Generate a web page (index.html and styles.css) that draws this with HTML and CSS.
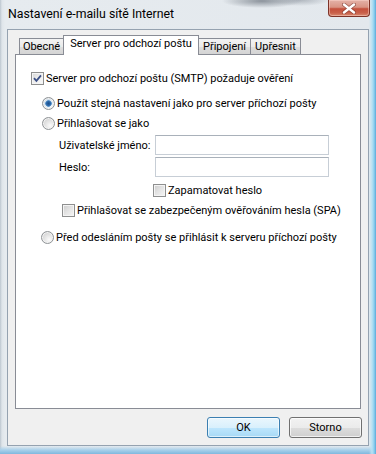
FILE: index.html
```html
<!DOCTYPE html>
<html lang="cs">
<head>
<meta charset="utf-8">
<title>Nastavení e-mailu sítě Internet</title>
<link rel="stylesheet" href="styles.css">
</head>
<body>
<div class="window">
  <div class="titlebar">
    <span class="title">Nastavení e-mailu sítě Internet</span>
    <div class="close">
      <svg width="14" height="11" viewBox="0 0 14 11">
        <path d="M2 1.5 L12 9.5 M12 1.5 L2 9.5" stroke="#6b2a22" stroke-width="4" stroke-linecap="round" opacity="0.55"/>
        <path d="M2 1.5 L12 9.5 M12 1.5 L2 9.5" stroke="#ffffff" stroke-width="2.4" stroke-linecap="round"/>
      </svg>
    </div>
  </div>
  <div class="client">
    <div class="tabs">
      <div class="tab tab-obecne">Obecné</div>
      <div class="tab active tab-server">Server pro odchozí poštu</div>
      <div class="tab tab-pripojeni">Připojení</div>
      <div class="tab tab-upresnit">Upřesnit</div>
    </div>
    <div class="panel">
      <div class="row row-smtp">
        <span class="check checked">
          <svg width="13" height="13" viewBox="0 0 13 13"><path d="M3 6.2 L5.4 8.8 L10 3.4" fill="none" stroke="#3b4f86" stroke-width="1.8"/></svg>
        </span>
        <span class="label">Server pro odchozí poštu (SMTP) požaduje ověření</span>
      </div>
      <div class="row row-r1">
        <span class="radio selected"></span>
        <span class="label">Použít stejná nastavení jako pro server příchozí pošty</span>
      </div>
      <div class="row row-r2">
        <span class="radio"></span>
        <span class="label">Přihlašovat se jako</span>
      </div>
      <div class="field row-user">
        <span class="field-label">Uživatelské jméno:</span>
        <span class="input"></span>
      </div>
      <div class="field row-pass">
        <span class="field-label">Heslo:</span>
        <span class="input"></span>
      </div>
      <div class="row row-remember">
        <span class="check"></span>
        <span class="label">Zapamatovat heslo</span>
      </div>
      <div class="row row-spa">
        <span class="check"></span>
        <span class="label">Přihlašovat se zabezpečeným ověřováním hesla (SPA)</span>
      </div>
      <div class="row row-r3">
        <span class="radio"></span>
        <span class="label">Před odesláním pošty se přihlásit k serveru příchozí pošty</span>
      </div>
    </div>
    <div class="buttons">
      <button class="btn btn-default">OK</button>
      <button class="btn">Storno</button>
    </div>
  </div>
</div>
</body>
</html>
```
FILE: styles.css
```css
html, body {
  margin: 0;
  padding: 0;
}
body {
  width: 376px;
  height: 454px;
  overflow: hidden;
  font-family: Roboto, "Open Sans", sans-serif;
  font-size: 11px;
  color: #000;
}
.window {
  box-sizing: border-box;
  width: 376px;
  height: 454px;
  display: flex;
  flex-direction: column;
  padding: 0 7px 8px 7px;
  background:
    linear-gradient(to left, #5aa9d8 0, #8fd0ef 2px, #b9e2f3 4px, rgba(220,230,238,0) 7px),
    radial-gradient(ellipse 40px 7px at 262px 1px, rgba(110,118,128,0.75), rgba(110,118,128,0)),
    radial-gradient(ellipse 30px 6px at 300px 0px, rgba(140,148,158,0.6), rgba(140,148,158,0)),
    linear-gradient(to bottom, rgba(150,200,230,0) 446px, #a9d0ea 450px, #7fb8de 454px),
    linear-gradient(to right, #bcc6cf 0, #dfe5ea 2px, #e6ebef 5px, #e3e8ed 100%);
}
.titlebar {
  height: 29px;
  display: flex;
  align-items: flex-start;
}
.title {
  margin-top: 6px;
  margin-left: 1px;
  font-size: 12.3px;
  line-height: 16px;
  color: #000;
}
.close {
  margin-left: auto;
  margin-right: -1px;
  width: 42px;
  height: 17px;
  box-sizing: border-box;
  border: 1px solid #7d3328;
  border-top: none;
  border-radius: 0 0 4px 4px;
  background: linear-gradient(to bottom, #e4b2a8 0, #d99484 45%, #c4503c 55%, #c9604a 80%, #d98a70 100%);
  box-shadow: inset 0 0 0 1px rgba(255,220,210,0.45);
  display: flex;
  align-items: center;
  justify-content: center;
}
.client {
  flex: 1;
  display: flex;
  flex-direction: column;
  border: 1px solid #95a2b0;
  background: #f0f0f0;
  padding: 5px 7px 7px 7px;
}
.tabs {
  display: flex;
  align-items: flex-end;
  height: 19px;
  padding-left: 4px;
}
.tab {
  box-sizing: border-box;
  height: 16px;
  border: 1px solid #898c95;
  border-bottom: none;
  background: linear-gradient(to bottom, #f3f3f3 0, #ebebeb 50%, #dedede 51%, #d4d4d4 100%);
  display: flex;
  align-items: center;
  justify-content: center;
  line-height: 14px;
  margin-right: -1px;
  white-space: nowrap;
}
.tab.active {
  height: 20px;
  margin-bottom: -1px;
  background: #fff;
  position: relative;
  z-index: 1;
  padding-bottom: 3px;
}
.tab-obecne { width: 45px; }
.tab-server { width: 136px; }
.tab-pripojeni { width: 53px; }
.tab-upresnit { width: 51px; }
.panel {
  flex: 1;
  border: 1px solid #898c95;
  background: #fff;
  display: flex;
  flex-direction: column;
}
.row {
  display: flex;
  align-items: center;
  height: 16px;
}
.label {
  line-height: 15px;
  white-space: nowrap;
}
.row-smtp { margin-top: 15px; margin-left: 15px; }
.row-r1 { margin-top: 9px; margin-left: 26px; }
.row-r2 { margin-top: 4px; margin-left: 26px; }
.row-remember { margin-top: 5px; margin-left: 137px; }
.row-spa { margin-top: 4px; margin-left: 46px; }
.row-r3 { margin-top: 11px; margin-left: 25px; }
.check {
  box-sizing: border-box;
  width: 13px;
  height: 13px;
  flex: none;
  border: 1px solid #8e8f8f;
  background: linear-gradient(135deg, #cbcbcb 0, #e2e2e2 45%, #f6f6f6 100%);
  box-shadow: inset 0 0 0 1px #f4f4f4;
  margin-right: 2px;
  position: relative;
}
.check.checked {
  background: linear-gradient(135deg, #d6d6d6 0, #ececec 45%, #fafafa 100%);
}
.check svg {
  position: absolute;
  left: -1px;
  top: -1px;
}
.radio {
  box-sizing: border-box;
  width: 13px;
  height: 13px;
  flex: none;
  border-radius: 50%;
  border: 1px solid #8f9396;
  background: radial-gradient(circle at 65% 70%, #fbfbfb 0, #e4e4e4 45%, #c6c6c6 100%);
  box-shadow: inset 0 0 0 1px #f3f3f3;
  margin-right: 2px;
}
.radio.selected {
  background:
    radial-gradient(circle at 50% 50%, #1c4f8a 0, #2a66a8 2px, #5e97cc 3px, rgba(255,255,255,0) 3.6px),
    radial-gradient(circle at 65% 70%, #f4f8fb 0, #d8e4ee 55%, #b8c6d2 100%);
}
.field {
  display: flex;
  align-items: center;
  margin-left: 43px;
}
.row-user { margin-top: 4px; }
.row-pass { margin-top: 2px; }
.field-label {
  width: 96px;
  flex: none;
  white-space: nowrap;
}
.input {
  box-sizing: border-box;
  width: 174px;
  height: 20px;
  border: 1px solid #c7ced6;
  border-top-color: #a9b1ba;
  background: #fff;
}
.buttons {
  display: flex;
  justify-content: flex-end;
  gap: 9px;
  height: 21px;
  margin-top: 8px;
  margin-right: -1px;
}
.btn {
  box-sizing: border-box;
  width: 73px;
  height: 21px;
  padding: 0;
  font-family: Roboto, "Open Sans", sans-serif;
  font-size: 11px;
  color: #000;
  border: 1px solid #707070;
  border-radius: 3px;
  background: linear-gradient(to bottom, #f2f2f2 0, #ebebeb 50%, #dddddd 51%, #cfcfcf 100%);
  box-shadow: inset 0 0 0 1px rgba(255,255,255,0.7);
}
.btn-default {
  border-color: #3c7fb1;
  background: linear-gradient(to bottom, #eaf6fd 0, #d9f0fc 50%, #bee6fd 51%, #a7d9f5 100%);
  box-shadow: inset 0 0 0 1px rgba(255,255,255,0.6);
}
```
